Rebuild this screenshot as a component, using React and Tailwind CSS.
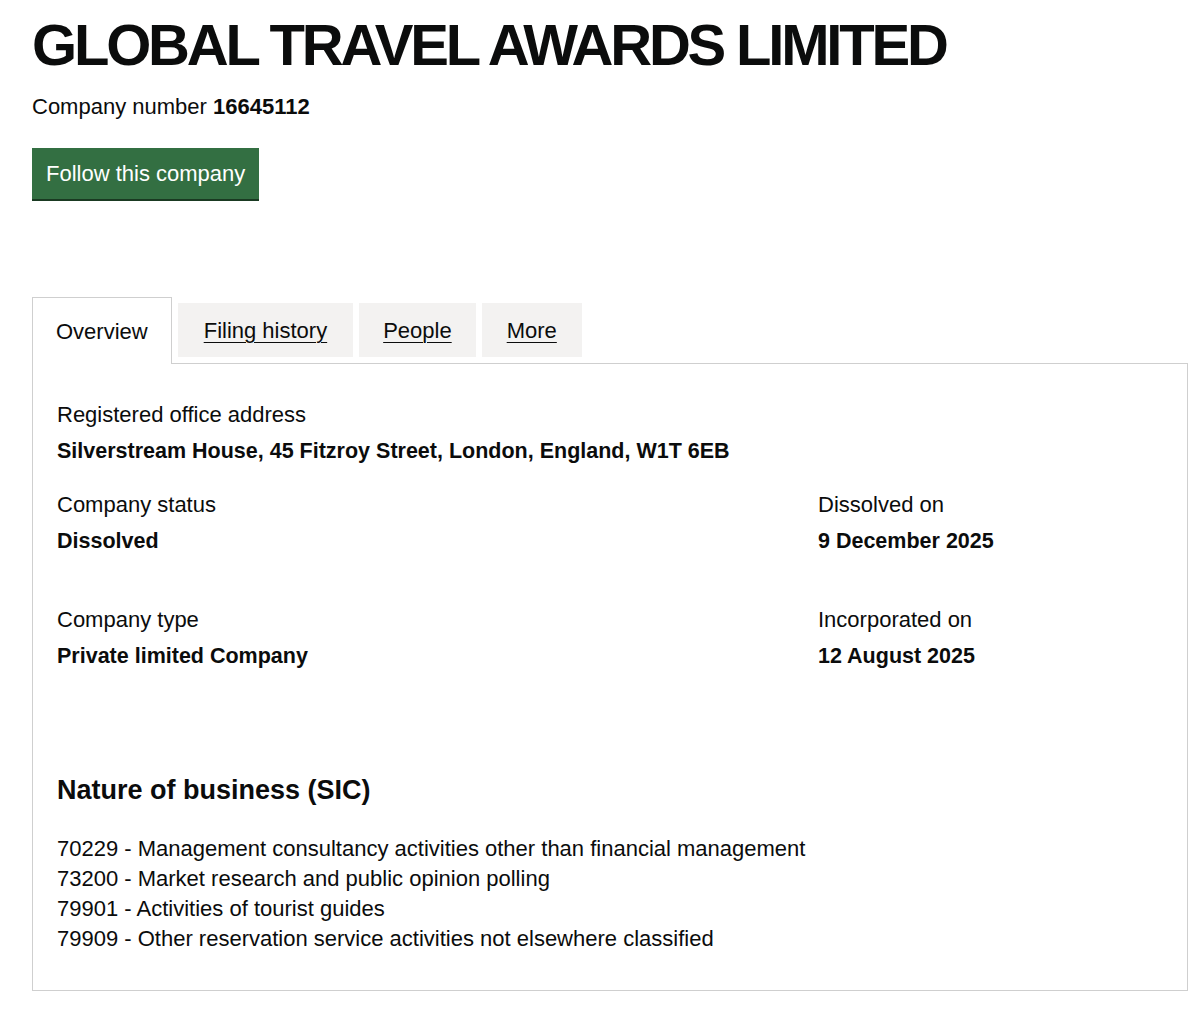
import React from 'react';

const sic = [
  '70229 - Management consultancy activities other than financial management',
  '73200 - Market research and public opinion polling',
  '79901 - Activities of tourist guides',
  '79909 - Other reservation service activities not elsewhere classified',
];

function Item({ label, value, className = '' }) {
  return (
    <div className={className}>
      <div className="leading-[30px] mb-[6px]">{label}</div>
      <div className="leading-[30px] font-bold text-[21.5px]">{value}</div>
    </div>
  );
}

export default function App() {
  return (
    <div className="min-h-screen bg-white text-[#0b0c0c] font-['Liberation_Sans',Arial,sans-serif] text-[22px] pl-[32px] pr-[11px] pt-[12px]">
      <h1 className="text-[58px] leading-[66px] font-bold tracking-[-3.2px] text-[#0b0c0c]">GLOBAL TRAVEL AWARDS LIMITED</h1>
      <p className="mt-[14px] leading-[30px]">
        Company number <strong className="font-bold">16645112</strong>
      </p>
      <button className="mt-[26px] h-[51px] px-[14px] bg-[#336f42] text-white text-[22px] leading-[30px] shadow-[0_2px_0_#1a3a22] border-0">
        Follow this company
      </button>

      <div className="mt-[98px]">
        <div className="flex items-end gap-[6px]">
          <div className="relative z-10 -mb-px h-[67px] px-[23px] flex items-center border border-b-0 border-[#cfcfcf] bg-white">
            Overview
          </div>
          <a href="#" className="h-[54px] mb-[6px] px-[26px] flex items-center bg-[#f3f2f1] underline underline-offset-[4px] decoration-1">Filing history</a>
          <a href="#" className="h-[54px] mb-[6px] px-[24px] flex items-center bg-[#f3f2f1] underline underline-offset-[4px] decoration-1">People</a>
          <a href="#" className="h-[54px] mb-[6px] px-[25px] flex items-center bg-[#f3f2f1] underline underline-offset-[4px] decoration-1">More</a>
        </div>
        <div className="border border-[#cfcfcf] px-[24px] pt-[36px] pb-[36px]">
          <Item label="Registered office address" value="Silverstream House, 45 Fitzroy Street, London, England, W1T 6EB" />
          <div className="grid grid-cols-[761px_1fr] mt-[24px]">
            <Item label="Company status" value="Dissolved" />
            <Item label="Dissolved on" value="9 December 2025" />
          </div>
          <div className="grid grid-cols-[761px_1fr] mt-[49px]">
            <Item label="Company type" value="Private limited Company" />
            <Item label="Incorporated on" value="12 August 2025" />
          </div>
          <h2 className="mt-[102px] text-[27px] leading-[35px] font-bold">Nature of business (SIC)</h2>
          <ul className="mt-[26px]">
            {sic.map(s => (
              <li key={s} className="leading-[30px]">{s}</li>
            ))}
          </ul>
        </div>
      </div>
    </div>
  );
}
